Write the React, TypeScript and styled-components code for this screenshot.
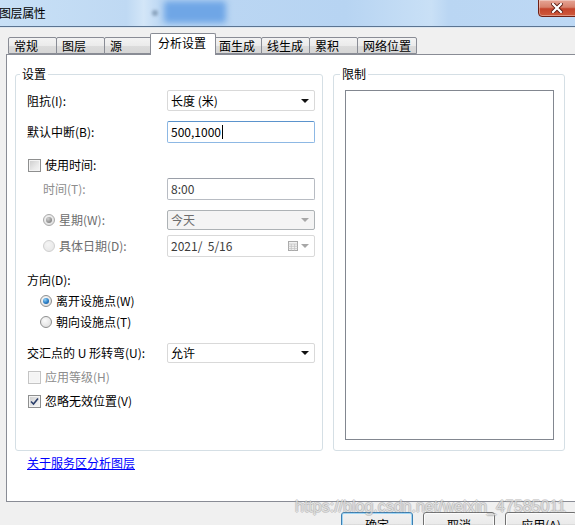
import React from "react";
import styled, { createGlobalStyle } from "styled-components";

const GlobalStyle = createGlobalStyle`
  html, body {
    margin: 0;
    padding: 0;
  }
  body {
    width: 575px;
    height: 525px;
    overflow: hidden;
    background: #f0f0f0;
    font-family: "Noto Sans CJK SC", "Noto Sans", sans-serif;
    font-size: 12px;
    color: #000;
  }
`;

const Window = styled.div`
  position: relative;
  width: 575px;
  height: 525px;
  overflow: hidden;
  background: #f0f0f0;
  display: flex;
  flex-direction: column;
`;

const TitleBar = styled.div`
  position: relative;
  flex-shrink: 0;
  height: 26px;
  display: flex;
  align-items: center;
  background: linear-gradient(
    90deg,
    #c8e0f6 0%,
    #bfd9f3 22%,
    #d3e6f8 25%,
    #bcd7f3 28%,
    #b7d4f2 60%,
    #c9e0f6 75%,
    #bad6f3 78%,
    #bdd8f4 100%
  );
  border-bottom: 1px solid #5b7491;
  box-shadow: 0 1px 0 #dfe7ef;
  overflow: hidden;
`;

const TitleText = styled.span`
  position: relative;
  z-index: 1;
  margin-left: -1px;
  font-size: 12px;
  line-height: 16px;
  letter-spacing: -0.4px;
`;

const GlassBlur = styled.div`
  position: absolute;
  left: 164px;
  top: 1px;
  width: 62px;
  height: 22px;
  border-radius: 3px;
  background: #6fa6e6;
  filter: blur(3px);
`;

const GlassArrow = styled.div`
  position: absolute;
  left: 152px;
  top: 10px;
  width: 6px;
  height: 6px;
  border-radius: 50%;
  background: #8aa3bd;
  filter: blur(1.5px);
`;

const CloseButton = styled.div`
  position: absolute;
  right: -6px;
  top: -1px;
  width: 43px;
  height: 18px;
  box-sizing: border-box;
  border: 1px solid #6f2015;
  border-radius: 0 0 4px 4px;
  background: linear-gradient(180deg, #e6a596 0%, #d7816c 45%, #c4442c 55%, #cf5a3c 100%);
  box-shadow: inset 0 0 0 1px rgba(255, 255, 255, 0.35);
  display: flex;
  align-items: center;
  justify-content: center;
  padding-right: 6px;
`;

const Body = styled.div`
  flex: 1;
  padding: 6px 0 0 6px;
`;

const TabRow = styled.div`
  position: relative;
  z-index: 1;
  height: 22px;
  margin-bottom: -1px;
  padding-left: 2px;
  display: flex;
  align-items: flex-end;
`;

const Tab = styled.div<{ $active?: boolean }>`
  box-sizing: border-box;
  min-width: ${(p) => (p.$active ? 66 : 49)}px;
  height: ${(p) => (p.$active ? 22 : 17)}px;
  margin: ${(p) => (p.$active ? "0 -2px 0 -3px" : "0 0 1px -1px")};
  padding: ${(p) => (p.$active ? "0 7px 3px" : "0 5px")};
  border: 1px solid #898c95;
  border-bottom: ${(p) => (p.$active ? "none" : "1px solid #898c95")};
  border-radius: 2px 2px 0 0;
  background: ${(p) =>
    p.$active ? "#fff" : "linear-gradient(180deg, #f3f3f3 0%, #ebebeb 50%, #dcdcdc 51%, #d6d6d6 100%)"};
  position: relative;
  z-index: ${(p) => (p.$active ? 2 : 1)};
  display: flex;
  align-items: center;
  line-height: 14px;
  white-space: nowrap;

  &:first-child {
    margin-left: 0;
  }
`;

const Panel = styled.div`
  position: relative;
  box-sizing: border-box;
  width: 575px;
  height: 448px;
  border: 1px solid #898c95;
  border-right: none;
  background: #fff;
  padding: 12px 0 0 8px;
`;

const Columns = styled.div`
  display: grid;
  grid-template-columns: 308px 232px;
  column-gap: 10px;
  height: 384px;
`;

const Group = styled.fieldset`
  margin: 0;
  padding: 0;
  min-width: 0;
  box-sizing: border-box;
  border: 1px solid #d5dfe5;
  border-radius: 3px;
`;

const Legend = styled.legend<{ $offset: number }>`
  margin-left: ${(p) => p.$offset}px;
  padding: 0 2px;
  font-size: 12px;
  line-height: 14px;
`;

const GroupInner = styled.div`
  padding: 0 7px 0 11px;
  display: flex;
  flex-direction: column;
`;

const Row = styled.div<{ $mt: number; $h: number }>`
  margin-top: ${(p) => p.$mt}px;
  height: ${(p) => p.$h}px;
  display: grid;
  grid-template-columns: 140px 148px;
  align-items: center;
`;

const LineRow = styled.div<{ $mt: number; $indent?: number }>`
  margin-top: ${(p) => p.$mt}px;
  height: 18px;
  padding-left: ${(p) => p.$indent ?? 1}px;
  display: flex;
  align-items: center;
  gap: 4px;
`;

const Cell = styled.div<{ $indent?: number }>`
  padding-left: ${(p) => p.$indent ?? 0}px;
  display: flex;
  align-items: center;
  gap: 4px;
`;

const Label = styled.span<{ $tone?: "normal" | "muted" | "faint" }>`
  line-height: 14px;
  white-space: nowrap;
  color: ${(p) => (p.$tone === "faint" ? "#8d8d8d" : p.$tone === "muted" ? "#6d6d6d" : "#000")};
`;

const Field = styled.div<{ $kind: "combo" | "focus" | "plain" | "disabled" | "date"; $h: number }>`
  box-sizing: border-box;
  height: ${(p) => p.$h}px;
  padding: 0 5px 0 3px;
  display: flex;
  align-items: center;
  justify-content: space-between;
  border-radius: 2px;
  line-height: 14px;
  background: ${(p) => (p.$kind === "disabled" ? "#f4f4f4" : "#fff")};
  border: 1px solid
    ${(p) =>
      p.$kind === "focus"
        ? "#8db8e4"
        : p.$kind === "plain"
        ? "#b8bcc3"
        : p.$kind === "disabled"
        ? "#adb2b5"
        : "#d9d9d9"};
  border-top-color: ${(p) => (p.$kind === "focus" ? "#5b93cc" : p.$kind === "plain" ? "#9a9fa8" : undefined)};
  color: ${(p) => (p.$kind === "disabled" ? "#6d6d6d" : p.$kind === "plain" || p.$kind === "date" ? "#3c3c3c" : "#000")};
`;

const Value = styled.span`
  display: flex;
  align-items: center;
  white-space: pre;
`;

const Caret = styled.span`
  display: inline-block;
  width: 1px;
  height: 14px;
  margin-left: 1px;
  background: #000;
`;

const Arrow = styled.span<{ $muted?: boolean }>`
  width: 0;
  height: 0;
  border-left: 4px solid transparent;
  border-right: 4px solid transparent;
  border-top: 4px solid ${(p) => (p.$muted ? "#a7a7a7" : "#111")};
`;

const DateTools = styled.span`
  display: flex;
  align-items: center;
  gap: 3px;
`;

const CheckBox = styled.span<{ $disabled?: boolean }>`
  flex-shrink: 0;
  box-sizing: border-box;
  width: 13px;
  height: 13px;
  border: 1px solid ${(p) => (p.$disabled ? "#c4c4c4" : "#8e8f8f")};
  background: ${(p) =>
    p.$disabled ? "#f4f4f4" : "linear-gradient(135deg, #cbcbcb 0%, #e9e9e9 60%, #f6f6f6 100%)"};
  box-shadow: inset 0 0 0 1px ${(p) => (p.$disabled ? "#f7f7f7" : "#f4f4f4")};
  display: flex;
  align-items: center;
  justify-content: center;
`;

const Radio = styled.span<{ $checked?: boolean; $disabled?: boolean }>`
  flex-shrink: 0;
  box-sizing: border-box;
  width: 12px;
  height: 12px;
  border-radius: 50%;
  border: 1px solid ${(p) => (p.$disabled ? (p.$checked ? "#a9a9a9" : "#cfcfcf") : "#8e8f8f")};
  background: ${(p) =>
    p.$disabled
      ? p.$checked
        ? "radial-gradient(circle at 40% 35%, #f4f4f4 0%, #dcdcdc 100%)"
        : "radial-gradient(circle at 40% 35%, #f4f4f4 0%, #e4e4e4 100%)"
      : "radial-gradient(circle at 40% 35%, #fbfbfb 0%, #d8d8d8 100%)"};
  display: flex;
  align-items: center;
  justify-content: center;

  &::after {
    content: "";
    display: ${(p) => (p.$checked ? "block" : "none")};
    width: 6px;
    height: 6px;
    border-radius: 50%;
    background: ${(p) =>
      p.$disabled
        ? "radial-gradient(circle at 35% 30%, #cfcfcf 0%, #8a8a8a 70%)"
        : "radial-gradient(circle at 35% 30%, #8fd0f5 0%, #2a7cc4 55%, #0f4f91 100%)"};
  }
`;

const ListBox = styled.div`
  margin: 9px 10px 10px 11px;
  height: 350px;
  box-sizing: border-box;
  border: 1px solid #828790;
  background: #fff;
`;

const HelpLink = styled.a`
  display: inline-block;
  margin: 5px 0 0 12px;
  font-size: 12px;
  line-height: 14px;
  color: #0000ff;
  text-decoration: underline;
  cursor: pointer;
`;

const ButtonRow = styled.div`
  margin-top: 10px;
  padding-left: 335px;
  display: flex;
  gap: 10px;
`;

const Button = styled.div<{ $default?: boolean }>`
  box-sizing: border-box;
  width: 72px;
  height: 23px;
  flex-shrink: 0;
  border: 1px solid ${(p) => (p.$default ? "#3c7fb1" : "#707070")};
  border-radius: 3px;
  background: linear-gradient(180deg, #f2f2f2 0%, #ebebeb 50%, #dddddd 51%, #cfcfcf 100%);
  box-shadow: inset 0 0 0 1px ${(p) => (p.$default ? "#9fd5f5" : "#fcfcfc")};
  display: flex;
  align-items: center;
  justify-content: center;
  padding-top: 2px;
  line-height: 14px;
`;

const Watermark = styled.div`
  position: absolute;
  left: 295px;
  top: 498px;
  font-family: "Liberation Sans", Arial, sans-serif;
  font-size: 16px;
  line-height: 18px;
  color: rgba(255, 255, 255, 0.55);
  text-shadow: 1px 0 rgba(140, 140, 140, 0.35), -1px 0 rgba(140, 140, 140, 0.35),
    0 1px rgba(140, 140, 140, 0.35), 0 -1px rgba(140, 140, 140, 0.35);
  white-space: nowrap;
  pointer-events: none;
`;

const tabs = ["常规", "图层", "源", "分析设置", "面生成", "线生成", "累积", "网络位置"];

const CloseGlyph = () => (
  <svg width="12" height="10" viewBox="0 0 12 10">
    <path d="M2 1 L10 9 M10 1 L2 9" stroke="#5a1a10" strokeWidth="4" strokeLinecap="square" />
    <path d="M2 1 L10 9 M10 1 L2 9" stroke="#fff" strokeWidth="2.2" strokeLinecap="square" />
  </svg>
);

const CheckMark = () => (
  <svg width="9" height="9" viewBox="0 0 9 9">
    <path d="M1 4.5 L3.5 7 L8 1.5" fill="none" stroke="#2b3f6b" strokeWidth="1.6" />
  </svg>
);

const CalendarIcon = () => (
  <svg width="10" height="10" viewBox="0 0 10 10">
    <rect x="0.5" y="0.5" width="9" height="9" fill="#f2f2f2" stroke="#a9a9a9" />
    <path d="M0.5 3 H9.5 M0.5 5.3 H9.5 M0.5 7.6 H9.5 M3.3 3 V9.5 M6.6 3 V9.5" stroke="#c4c4c4" strokeWidth="0.8" />
  </svg>
);

export default function App() {
  return (
    <>
      <GlobalStyle />
      <Window>
        <TitleBar>
          <GlassArrow />
          <GlassBlur />
          <TitleText>图层属性</TitleText>
          <CloseButton>
            <CloseGlyph />
          </CloseButton>
        </TitleBar>
        <Body>
          <TabRow>
            {tabs.map((t) => (
              <Tab key={t} $active={t === "分析设置"}>
                {t}
              </Tab>
            ))}
          </TabRow>
          <Panel>
            <Columns>
              <Group>
                <Legend $offset={4}>设置</Legend>
                <GroupInner>
                  <Row $mt={9} $h={21}>
                    <Cell>
                      <Label>阻抗(I):</Label>
                    </Cell>
                    <Field $kind="combo" $h={21}>
                      <Value>长度 (米)</Value>
                      <Arrow />
                    </Field>
                  </Row>
                  <Row $mt={10} $h={22}>
                    <Cell>
                      <Label>默认中断(B):</Label>
                    </Cell>
                    <Field $kind="focus" $h={22}>
                      <Value>
                        500,1000
                        <Caret />
                      </Value>
                    </Field>
                  </Row>
                  <LineRow $mt={13}>
                    <CheckBox />
                    <Label>使用时间:</Label>
                  </LineRow>
                  <Row $mt={4} $h={22}>
                    <Cell $indent={16}>
                      <Label $tone="faint">时间(T):</Label>
                    </Cell>
                    <Field $kind="plain" $h={22}>
                      <Value>8:00</Value>
                    </Field>
                  </Row>
                  <Row $mt={10} $h={20}>
                    <Cell $indent={16}>
                      <Radio $checked $disabled />
                      <Label $tone="muted">星期(W):</Label>
                    </Cell>
                    <Field $kind="disabled" $h={20}>
                      <Value>今天</Value>
                      <Arrow $muted />
                    </Field>
                  </Row>
                  <Row $mt={5} $h={22}>
                    <Cell $indent={16}>
                      <Radio $disabled />
                      <Label $tone="muted">具体日期(D):</Label>
                    </Cell>
                    <Field $kind="date" $h={22}>
                      <Value>2021/  5/16</Value>
                      <DateTools>
                        <CalendarIcon />
                        <Arrow $muted />
                      </DateTools>
                    </Field>
                  </Row>
                  <LineRow $mt={14} $indent={0}>
                    <Label>方向(D):</Label>
                  </LineRow>
                  <LineRow $mt={3} $indent={13}>
                    <Radio $checked />
                    <Label>离开设施点(W)</Label>
                  </LineRow>
                  <LineRow $mt={3} $indent={13}>
                    <Radio />
                    <Label>朝向设施点(T)</Label>
                  </LineRow>
                  <Row $mt={12} $h={20}>
                    <Cell>
                      <Label>交汇点的 U 形转弯(U):</Label>
                    </Cell>
                    <Field $kind="combo" $h={20}>
                      <Value>允许</Value>
                      <Arrow />
                    </Field>
                  </Row>
                  <LineRow $mt={5}>
                    <CheckBox $disabled />
                    <Label $tone="faint">应用等级(H)</Label>
                  </LineRow>
                  <LineRow $mt={6}>
                    <CheckBox>
                      <CheckMark />
                    </CheckBox>
                    <Label>忽略无效位置(V)</Label>
                  </LineRow>
                </GroupInner>
              </Group>
              <Group>
                <Legend $offset={6}>限制</Legend>
                <ListBox />
              </Group>
            </Columns>
            <HelpLink>关于服务区分析图层</HelpLink>
          </Panel>
          <ButtonRow>
            <Button $default>确定</Button>
            <Button>取消</Button>
            <Button>应用(A)</Button>
          </ButtonRow>
        </Body>
        <Watermark>https://blog.csdn.net/weixin_47585011</Watermark>
      </Window>
    </>
  );
}
